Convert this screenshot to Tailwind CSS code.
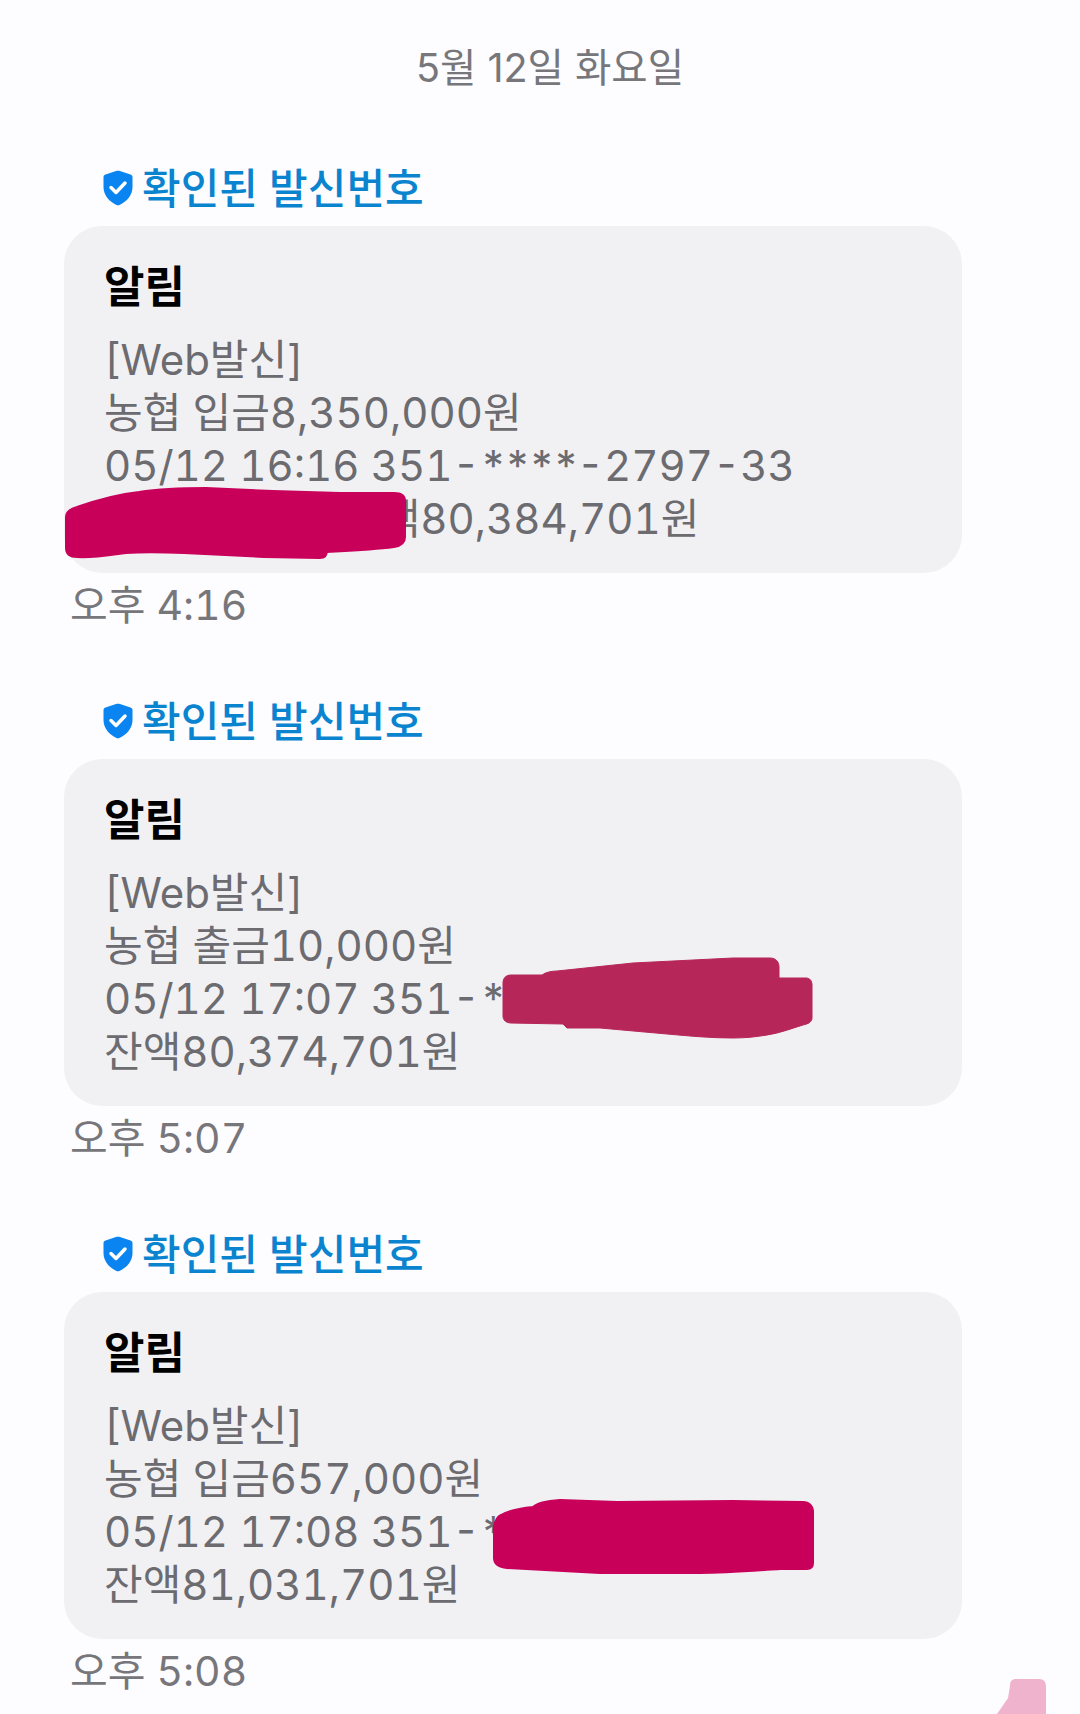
<!DOCTYPE html>
<html lang="ko">

<head>
  <meta charset="UTF-8" />
  <meta name="viewport" content="width=device-width, initial-scale=1.0" />
  <title>Messages</title>
  <script src="https://cdn.jsdelivr.net/npm/@tailwindcss/browser@4"></script>
</head>

<body class="bg-[#fdfcff]">
  <div class="relative w-[1080px] h-[1714px] overflow-hidden font-['Inter','Noto_Sans_CJK_KR',sans-serif]">
    <!-- Date -->
    <div class="w-[1100px] pt-[42px] h-[160px] text-center text-[39.5px] leading-[52px] text-[#77777b]">5월 12일 화요일</div>

    <!-- Message 1 -->
    <section class="mb-[60px]">
      <div class="h-[66px] pl-[102px] flex items-start gap-[8px] text-[42px] leading-[58px] font-medium text-[#0a84cf]">
        <svg class="mt-[10px] w-[32px] h-[36px]" viewBox="0 0 31 36"><path fill="#0a84f0" d="M13.5 1 3 4.6C1.700 5 1 6 1 7.300V17c0 8 5.500 14.500 13 18 .9.4 2 .4 3 0 7.500-3.500 13-10 13-18V7.300C30 6 29.300 5 28 4.600L17.500 1c-1.300-.4-2.700-.4-4 0Z"/><path fill="none" stroke="#fff" stroke-width="3.500" stroke-linecap="round" stroke-linejoin="round" d="m8.500 17.500 5 5 9-9.500"/></svg>
        <span>확인된 발신번호</span>
      </div>
      <div class="ml-[64px] w-[898px] h-[347px] rounded-[38px] bg-[#f1f1f4] pl-[40px] pt-[36px]">
        <div class="text-[44px] leading-[50px] font-bold text-black">알림</div>
        <div class="mt-[21px] text-[42px] leading-[53px] tabular-nums text-[#6b6b70]">
          <div>[Web발신]</div>
          <div>농협 입금8,350,000원</div>
          <div>05/12 16:16 351-<span class="tracking-[-3px]">****</span>-2797-33</div>
          <div class="pl-[239px]">잔액80,384,701원</div>
        </div>
      </div>
      <div class="pl-[70px] h-[60px] pt-[6px] text-[41px] leading-[52px] tabular-nums text-[#77777b]">오후 4:16</div>
    </section>

    <!-- Message 2 -->
    <section class="mb-[60px]">
      <div class="h-[66px] pl-[102px] flex items-start gap-[8px] text-[42px] leading-[58px] font-medium text-[#0a84cf]">
        <svg class="mt-[10px] w-[32px] h-[36px]" viewBox="0 0 31 36"><path fill="#0a84f0" d="M13.5 1 3 4.6C1.700 5 1 6 1 7.300V17c0 8 5.500 14.500 13 18 .9.4 2 .4 3 0 7.500-3.500 13-10 13-18V7.300C30 6 29.300 5 28 4.600L17.500 1c-1.300-.4-2.700-.4-4 0Z"/><path fill="none" stroke="#fff" stroke-width="3.500" stroke-linecap="round" stroke-linejoin="round" d="m8.500 17.500 5 5 9-9.500"/></svg>
        <span>확인된 발신번호</span>
      </div>
      <div class="ml-[64px] w-[898px] h-[347px] rounded-[38px] bg-[#f1f1f4] pl-[40px] pt-[36px]">
        <div class="text-[44px] leading-[50px] font-bold text-black">알림</div>
        <div class="mt-[21px] text-[42px] leading-[53px] tabular-nums text-[#6b6b70]">
          <div>[Web발신]</div>
          <div>농협 출금10,000원</div>
          <div>05/12 17:07 351-<span class="tracking-[-3px]">****</span></div>
          <div>잔액80,374,701원</div>
        </div>
      </div>
      <div class="pl-[70px] h-[60px] pt-[6px] text-[41px] leading-[52px] tabular-nums text-[#77777b]">오후 5:07</div>
    </section>

    <!-- Message 3 -->
    <section>
      <div class="h-[66px] pl-[102px] flex items-start gap-[8px] text-[42px] leading-[58px] font-medium text-[#0a84cf]">
        <svg class="mt-[10px] w-[32px] h-[36px]" viewBox="0 0 31 36"><path fill="#0a84f0" d="M13.5 1 3 4.6C1.700 5 1 6 1 7.300V17c0 8 5.500 14.500 13 18 .9.4 2 .4 3 0 7.500-3.500 13-10 13-18V7.300C30 6 29.300 5 28 4.600L17.500 1c-1.300-.4-2.700-.4-4 0Z"/><path fill="none" stroke="#fff" stroke-width="3.500" stroke-linecap="round" stroke-linejoin="round" d="m8.500 17.500 5 5 9-9.500"/></svg>
        <span>확인된 발신번호</span>
      </div>
      <div class="ml-[64px] w-[898px] h-[347px] rounded-[38px] bg-[#f1f1f4] pl-[40px] pt-[36px]">
        <div class="text-[44px] leading-[50px] font-bold text-black">알림</div>
        <div class="mt-[21px] text-[42px] leading-[53px] tabular-nums text-[#6b6b70]">
          <div>[Web발신]</div>
          <div>농협 입금657,000원</div>
          <div>05/12 17:08 351-<span class="tracking-[-3px]">****</span></div>
          <div>잔액81,031,701원</div>
        </div>
      </div>
      <div class="pl-[70px] h-[60px] pt-[6px] text-[41px] leading-[52px] tabular-nums text-[#77777b]">오후 5:08</div>
    </section>

    <!-- Scribbles drawn over the screenshot -->
    <svg class="absolute inset-0 w-[1080px] h-[1714px] pointer-events-none" viewBox="0 0 1080 1714">
      <path fill="#c9005a" stroke="#c9005a" stroke-width="2" stroke-linejoin="round" d="M66 517 C66 512 70 509 77 507 C100 499 120 494 139 492 C165 488 185 488 206 488 L273 491 L340 493 L394 493 C401 493 405 496 405 501 L405 537 C405 543 401 546 394 547 C370 550 345 551 327 552 C326 556 325 558 320 558 L264 557 L184 553 C160 552 140 552 126 553 C110 555 95 558 77 557 C70 557 66 554 66 548 Z"/>
      <path fill="#b72658" stroke="#b72658" stroke-width="1" stroke-linejoin="round" d="M503 983 C503 978 506 975 511 975 L542 975 C546 972 552 971 557 971 L633 963 L733 958 L770 958 C776 958 779 962 779 967 L779 978 L806 978 C810 978 812 981 812 985 L812 1018 C812 1022 808 1024 803 1025 C790 1029 780 1033 767 1035 C755 1037 745 1038 733 1038 C710 1038 690 1036 667 1034 L600 1028 L567 1028 L563 1024 L511 1023 C506 1023 503 1020 503 1016 Z"/>
      <path fill="#c9005a" stroke="#c9005a" stroke-width="2" stroke-linejoin="round" d="M494 1527 C495 1520 497 1517 501 1515 C510 1510 522 1508 533 1507 C537 1503 545 1501 560 1500 L617 1502 L733 1501 L803 1502 C809 1502 813 1506 813 1512 L813 1563 C813 1567 811 1569 807 1569 L780 1569 C750 1571 725 1573 700 1573 L600 1573 L507 1568 C499 1567 494 1564 494 1558 Z"/>
      <path fill="#f0b3cd" d="M997 1714 L1008 1698 L1010 1686 C1010 1681 1012 1679 1016 1679 L1039 1679 C1044 1679 1046 1682 1046 1687 L1046 1714 Z"/>
    </svg>
  </div>
</body>

</html>
